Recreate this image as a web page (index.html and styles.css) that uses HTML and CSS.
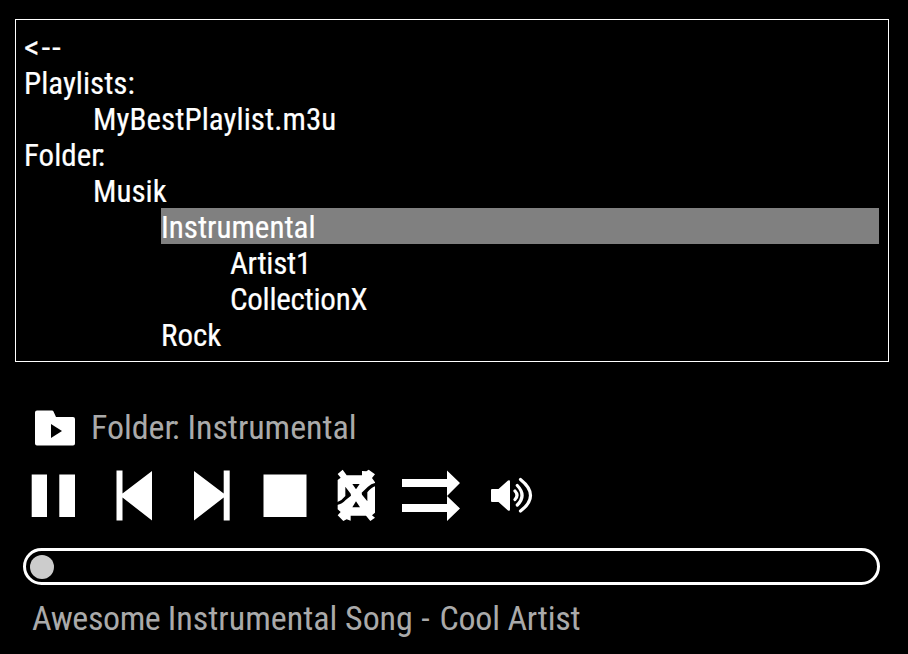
FILE: index.html
```
<!DOCTYPE html>
<html lang="en"><head><meta charset="utf-8"><title>Music player</title><link rel="stylesheet" href="styles.css"></head>
<body>
<main class="player">
<section class="browser">
<div class="row"><span class="label back">&lt;--</span></div>
<div class="row"><span class="label">Playlists:</span></div>
<div class="row level-1"><span class="label file">MyBestPlaylist.m3u</span></div>
<div class="row"><span class="label">Folde<span class="tight">r</span>:</span></div>
<div class="row level-1"><span class="label">Musik</span></div>
<div class="row level-2 selected"><span class="label">Instrumental</span></div>
<div class="row level-3"><span class="label artist">Artist1</span></div>
<div class="row level-3"><span class="label collection">CollectionX</span></div>
<div class="row level-2"><span class="label">Rock</span></div>
</section>
<div class="source">
<svg class="source-icon" viewBox="0 0 40 36"><path fill="#fff" d="M2 .5h15q1 0 1.500 1L21 7h17q2 0 2 2v24.500q0 2-2 2H2q-2 0-2-2V2.500q0-2 2-2z"/><path d="M16 14v14l11-7z"/></svg>
<span class="source-name">Folde<span class="tight">r</span>: Instrumental</span>
</div>
<div class="controls">
<svg viewBox="23 468 520 56" fill="#fff"><path d="M31.700 474.500H47V517H31.700zM59.300 474.500H75V517H59.300z"/><path d="M116.500 470.500h6v23L152 471v49.500l-29.500-23v23h-6zM229.700 470.500h-6v23L194 471v49.500l29.700-23v23h6z"/><path d="M263.500 474.500h43V517h-43z"/>
<g transform="translate(325 460) scale(.33333)"><path d="M38 42L53 29 65 46H111V33L124 34 131 29 150 43 141 54 150 67V158L141 166 150 173 136 183 123 167H77V182L65 178 55 183 38 166 47 156 38 148V60L47 53z"/><path fill="#000" d="M152 68Q138 70 128 81L110 98 111 104 127 124V97Q137 83 152 78zM36 135Q52 132 62 120L78 107 77 101 61 80V108Q50 122 36 127zM82 72H104L93 88zM93 124L82 142H105z"/></g>
<path d="M402 479h45v-8.500L460 483l-13 13 13 12.500-13 12.500v-9h-45v-8h45V496v-9h-45z"/>
<path d="M492 489h6.500l9.500-8.500q2-1 2 1v28q0 2-2 1l-9.500-8.500H492q-1 0-1-1v-11q0-1 1-1z"/><path fill="none" stroke="#fff" stroke-width="3.200" stroke-linecap="round" d="M515 491q4 4.200 0 8.500M517.300 485.500q9.500 10 0 19.500M520.500 479.500q20 16 0 31.500"/></svg>
</div>
<div class="progress"><span class="knob"></span></div>
<div class="song"><span class="song-name"><span class="song-word">Awesome </span>Instrumental <span class="song-end">Song</span><span class="dash"> - </span><span class="artist-name">Cool Artist</span></span></div>
</main></body></html>
```
FILE: styles.css
```
*{box-sizing:border-box}
body{margin:0;background:#000;color:#fff;font-family:"Roboto Condensed",Roboto,sans-serif}
.player{width:908px;height:654px;padding:19px 19px 0 15px;overflow:hidden}
.browser{height:343px;border:1px solid #fff;padding:8px 9px 9px 8px}
.row{height:36px;line-height:40px;font-size:31px;-webkit-text-stroke:.2px #fff}
.label,.source-name,.song-name{display:inline-block;white-space:nowrap}
.back{letter-spacing:1.5px;transform:scaleX(1.14);transform-origin:left}
.file{letter-spacing:.06px}
.tight{letter-spacing:-3px}
.artist{letter-spacing:-.3px}
.collection{letter-spacing:-.27px}
.level-1{margin-left:69px}.level-2{margin-left:137px}.level-3{margin-left:206px}
.selected{background:#808080}
.source{height:50px;margin-top:41px;padding-left:20px;display:flex;align-items:center;color:#aaa;font-size:34px}
.source-icon{width:40px;height:36px;margin-right:16px}
.source-name{margin-top:-2px;letter-spacing:-.04px}
.controls{height:56px;margin-top:15px;padding-left:8px}
.controls svg{width:520px;height:56px;display:block}
.progress{height:37px;margin:24px 9px 0 8px;border:3px solid #fff;border-radius:19px;padding:3.5px}
.knob{display:block;width:24px;height:24px;border-radius:50%;background:#ccc}
.song{color:#aaa;font-size:34px;margin-top:13px;padding-left:17px}
.song-word{letter-spacing:-.4px}
.song-end{letter-spacing:-.1px}
.dash{letter-spacing:.9px}
.artist-name{letter-spacing:-.2px}
```
